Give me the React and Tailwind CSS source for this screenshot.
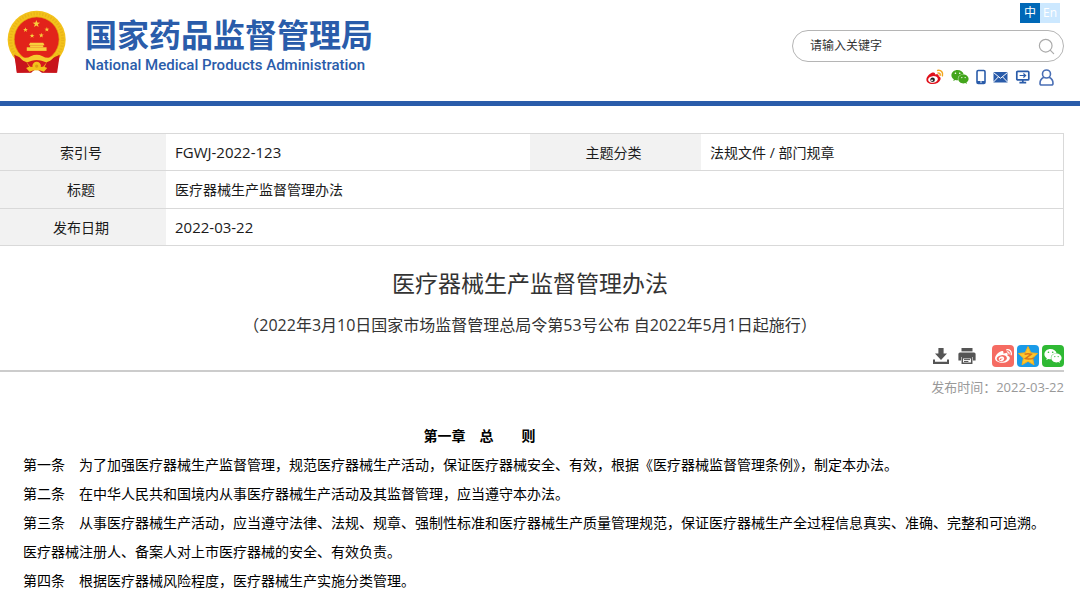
import React, { useState } from 'react';
import { Search } from 'lucide-react';
import { FaWeibo, FaWeixin } from 'react-icons/fa';

const articles = [
  '第一条　为了加强医疗器械生产监督管理，规范医疗器械生产活动，保证医疗器械安全、有效，根据《医疗器械监督管理条例》，制定本办法。',
  '第二条　在中华人民共和国境内从事医疗器械生产活动及其监督管理，应当遵守本办法。',
  '第三条　从事医疗器械生产活动，应当遵守法律、法规、规章、强制性标准和医疗器械生产质量管理规范，保证医疗器械生产全过程信息真实、准确、完整和可追溯。',
  '医疗器械注册人、备案人对上市医疗器械的安全、有效负责。',
  '第四条　根据医疗器械风险程度，医疗器械生产实施分类管理。',
];

const STAR = 'M0 -12 L2.8 -3.8 L11.4 -3.7 L4.5 1.5 L7 9.7 L0 4.8 L-7 9.7 L-4.5 1.5 L-11.4 -3.7 L-2.8 -3.8 Z';

const Emblem = () => (
  <svg viewBox="20 28 182 194" className="w-[60px] h-16 shrink-0" aria-hidden="true">
    <path d="M44 158 L50 218 L92 218 L109 206 L126 218 L170 218 L179 158 Z" fill="#c8141c" />
    <path d="M60 185 L66 216 M82 196 L80 216 M140 196 L142 216 M162 185 L156 216" stroke="#8e0d12" strokeWidth="3" />
    <circle cx="110" cy="118" r="88" fill="#f3c21b" />
    <circle cx="110" cy="118" r="79" fill="none" stroke="#d99a10" strokeWidth="9" strokeDasharray="4 5" opacity="0.35" />
    <path d="M42 164 Q58 170 78 184 L96 217 L50 218 Z M180 164 Q164 170 142 184 L126 217 L172 218 Z" fill="#c8141c" />
    <circle cx="110" cy="117" r="68" fill="#e2231a" stroke="#e0a010" strokeWidth="2" />
    <g fill="#f8cf3c">
      <path d={STAR} transform="translate(109 70)" />
      <path d={STAR} transform="translate(76 88) scale(.65)" />
      <path d={STAR} transform="translate(141 87) scale(.65)" />
      <path d={STAR} transform="translate(96 106) scale(.65)" />
      <path d={STAR} transform="translate(124 105) scale(.65)" />
      <path d="M90 127 H130 L134 135 H86 Z" />
      <path d="M90 135 H130 V141 H90 Z" />
      <path d="M80 141 H140 V152 H80 Z" />
    </g>
    <path d="M58 170 Q80 176 92 168 Q110 160 128 168 Q140 176 162 170 Q152 188 132 186 Q110 174 88 186 Q68 188 58 170 Z" fill="#f6cb2e" />
    <path d="M80 187 Q110 174 140 187 L128 202 H92 Z" fill="#d51c1c" />
    <circle cx="110" cy="198" r="13" fill="#f3c21b" />
    <circle cx="110" cy="198" r="5" fill="#dc9c12" />
    <path d="M78 204 Q94 196 110 206 Q126 196 142 204 L132 215 Q110 206 88 215 Z" fill="#f3c21b" />
  </svg>
);

const WeiboIcon = () => (
  <svg viewBox="0 0 18 16" className="w-[18px] h-4">
    <path d="M6.5 3.6 C8.4 3 9.4 4 8.9 5.6 C11 4.7 13.2 5 12.7 7.2 C14.4 7.8 15 9 14.4 10.7 C13.3 13.6 9.8 15.2 6.3 15 C3 14.8 .4 13.2 .4 10.7 C.4 8.2 3.3 4.7 6.5 3.6 Z" fill="#e0101a" />
    <ellipse cx="7" cy="10.4" rx="4.9" ry="3.3" fill="#fff" transform="rotate(-8 7 10.4)" />
    <circle cx="6.6" cy="10.7" r="2.3" fill="#222" />
    <circle cx="6" cy="11.3" r=".9" fill="#fff" />
    <path d="M11.6 1.4 C15 .7 17.4 3.4 16.4 6.8 M12 4 C13.6 3.8 14.5 4.8 14.1 6.3" fill="none" stroke="#f3a51c" strokeWidth="1.5" strokeLinecap="round" />
  </svg>
);

const PhoneIcon = () => (
  <svg viewBox="0 0 10 16" className="w-[10px] h-4">
    <rect x="1" y="1.5" width="8" height="13" rx="1.2" fill="none" stroke="#2a5caa" strokeWidth="1.6" />
    <path d="M1 12 H9 V14 H1 Z" fill="#2a5caa" />
    <circle cx="5" cy="13" r=".8" fill="#fff" />
  </svg>
);

const MailIcon = () => (
  <svg viewBox="0 0 15 16" className="w-[15px] h-4">
    <rect x=".5" y="3" width="14" height="10.5" fill="#2a5caa" />
    <path d="M.5 3.5 L7.5 9.3 L14.5 3.5 M.5 13 L5.3 8 M14.5 13 L9.7 8" fill="none" stroke="#fff" strokeWidth="1" />
  </svg>
);

const MonitorIcon = () => (
  <svg viewBox="0 0 17 16" className="w-[17px] h-4" fill="none" stroke="#2a5caa" strokeWidth="1.7">
    <rect x="1.8" y="2.3" width="12" height="8.6" rx="1" />
    <path d="M7.8 10.7 V13.4 M4.4 13.6 H11.2" />
    <path d="M4.6 6.5 H10.4 M8.4 4.5 L10.6 6.5 L8.4 8.5" strokeWidth="1.2" />
  </svg>
);

const UserIcon = () => (
  <svg viewBox="0 0 15 17" className="w-[15px] h-[17px]" fill="none" stroke="#4a6fb5" strokeWidth="1.6">
    <circle cx="7.5" cy="5" r="4" />
    <path d="M4.8 8.2 C2.4 9.4 1 11.6 1 14.2 C1 15.4 1.6 16 2.6 16 H12.4 C13.4 16 14 15.4 14 14.2 C14 11.6 12.6 9.4 10.2 8.2" />
  </svg>
);

const DownloadIcon = () => (
  <svg viewBox="0 0 18 18" className="size-[18px]" fill="#555">
    <path d="M6.4 1 H11.6 V6.4 H15 L9 13 L3 6.4 H6.4 Z" />
    <path d="M1 12.5 H3 V14.8 H15 V12.5 H17 V17 H1 Z" />
  </svg>
);

const PrintIcon = () => (
  <svg viewBox="0 0 18 18" className="size-[18px]">
    <path d="M3.5 1 H14.5 V4.4 H3.5 Z" fill="#555" />
    <path d="M2 5.4 H16 Q17.6 5.4 17.6 7 V13.6 H15 V10 H3 V13.6 H.4 V7 Q.4 5.4 2 5.4 Z" fill="#555" />
    <path d="M4.3 10.8 H13.7 V16.2 H4.3 Z" fill="#fff" stroke="#555" strokeWidth="1.5" />
    <path d="M6 12.6 H12 M6 14.5 H10.4" stroke="#555" strokeWidth="1" />
  </svg>
);

const QzoneIcon = () => (
  <svg viewBox="0 0 22 22" className="size-[22px]">
    <path d="M11 1.6 L13.8 7.8 L20.5 8.5 L15.5 13.1 L17 19.8 L11 16.3 L5 19.8 L6.5 13.1 L1.5 8.5 L8.2 7.8 Z" fill="#fdc72f" stroke="#f5b01c" strokeWidth="1" strokeLinejoin="round" />
    <path d="M7.6 9.2 Q11 8.4 14.2 9.2 L8.4 13.6 Q12 14.8 17.4 12.8" fill="none" stroke="#d9741a" strokeWidth="1.4" />
  </svg>
);

const labelCell = 'pr-1 bg-[#f2f2f2] font-normal text-center';
const valueCell = 'px-[9px]';

const App = () => {
  const [keyword, setKeyword] = useState('');

  return (
    <div className="bg-white text-[14px] text-[#1a1a1a] font-['Open_Sans','Noto_Sans_CJK_SC',sans-serif]">
      {/* Site header */}
      <header className="flex justify-between items-start border-b-[5px] border-[#2a5caa]">
        <a href="#" className="flex gap-[18px] pl-[7px] pt-[10px] pb-[23px] text-[#2a5caa]">
          <Emblem />
          <span className="flex flex-col pt-1">
            <span className="text-[32px] leading-[38px] font-bold font-['Noto_Sans_CJK_SC',sans-serif]">国家药品监督管理局</span>
            <span className="text-[15px] leading-[26px] font-medium font-[Roboto,sans-serif]">National Medical Products Administration</span>
          </span>
        </a>

        <div className="flex flex-col items-end pt-[3px] pr-4">
          <div className="flex pr-1 text-[12px] leading-5 text-white text-center">
            <button type="button" className="w-5 bg-[#0068b7]">中</button>
            <button type="button" className="w-5 bg-[#cce8ff]">En</button>
          </div>
          <form
            onSubmit={(e) => e.preventDefault()}
            className="flex items-center w-[272px] h-8 mt-[7px] pl-[17px] pr-[7px] border border-[#b5b5b5] rounded-full"
          >
            <input
              type="text"
              aria-label="请输入关键字"
              placeholder="请输入关键字"
              value={keyword}
              onChange={(e) => setKeyword(e.target.value)}
              className="flex-1 min-w-0 text-[12px] outline-none placeholder:text-[#333]"
            />
            <button type="submit" aria-label="搜索"><Search size={19} strokeWidth={1.5} color="#aaa" /></button>
          </form>
          <nav className="flex items-center gap-[7px] mt-[6px] pr-[10px]">
            <a href="#" aria-label="微博"><WeiboIcon /></a>
            <a href="#" aria-label="微信"><FaWeixin size={18} color="#43a51c" /></a>
            <a href="#" aria-label="手机版"><PhoneIcon /></a>
            <a href="#" aria-label="邮箱"><MailIcon /></a>
            <a href="#" aria-label="电脑版"><MonitorIcon /></a>
            <a href="#" aria-label="登录"><UserIcon /></a>
          </nav>
        </div>
      </header>

      <main className="pr-4">
        {/* Document info */}
        <table className="w-full table-fixed mt-[27px] border-collapse border-y border-r border-[#d9d9d9]">
          <colgroup>
            <col className="w-[166px]" />
            <col className="w-[364px]" />
            <col className="w-[171px]" />
            <col />
          </colgroup>
          <tbody>
            <tr className="h-[37px] border-b border-[#d9d9d9]">
              <th scope="row" className={labelCell}>索引号</th>
              <td className={`${valueCell} text-[15px]`}>FGWJ-2022-123</td>
              <th scope="row" className={labelCell}>主题分类</th>
              <td className={valueCell}>法规文件 / 部门规章</td>
            </tr>
            <tr className="h-[38px] border-b border-[#d9d9d9]">
              <th scope="row" className={labelCell}>标题</th>
              <td colSpan={3} className={valueCell}>医疗器械生产监督管理办法</td>
            </tr>
            <tr className="h-[37px]">
              <th scope="row" className={labelCell}>发布日期</th>
              <td colSpan={3} className={`${valueCell} text-[15px]`}>2022-03-22</td>
            </tr>
          </tbody>
        </table>

        {/* Title */}
        <div className="pt-[19px] pr-1 text-center text-[#333]">
          <h1 className="text-[23px] leading-9">医疗器械生产监督管理办法</h1>
          <p className="mt-2 text-[16px] leading-8">（2022年3月10日国家市场监督管理总局令第53号公布 自2022年5月1日起施行）</p>
        </div>

        {/* Tools and sharing */}
        <div className="flex justify-end items-center pt-1 pb-[3px] border-b-2 border-[#ccc]">
          <div className="flex gap-2 pr-4">
            <button type="button" aria-label="下载"><DownloadIcon /></button>
            <button type="button" aria-label="打印"><PrintIcon /></button>
          </div>
          <div className="flex gap-[3px]">
            <button type="button" aria-label="分享到微博" className="flex items-center justify-center size-[22px] rounded-sm bg-[#f56b62]">
              <FaWeibo size={17} color="#fff" />
            </button>
            <button type="button" aria-label="分享到QQ空间" className="flex items-center justify-center size-[22px] rounded-sm bg-[#1a9be8]">
              <QzoneIcon />
            </button>
            <button type="button" aria-label="分享到微信" className="flex items-center justify-center size-[22px] rounded-sm bg-[#2fb934]">
              <FaWeixin size={18} color="#fff" />
            </button>
          </div>
        </div>
        <p className="pt-[3px] text-right text-[13px] leading-6 text-[#999]">发布时间：2022-03-22</p>

        {/* Text */}
        <article className="pt-[22px] pl-[23px] leading-[29px] text-black">
          <h2 className="pr-[128px] text-center font-bold">第一章　总　　则</h2>
          {articles.map((text) => (
            <p key={text}>{text}</p>
          ))}
        </article>
      </main>
    </div>
  );
};

export default App;
